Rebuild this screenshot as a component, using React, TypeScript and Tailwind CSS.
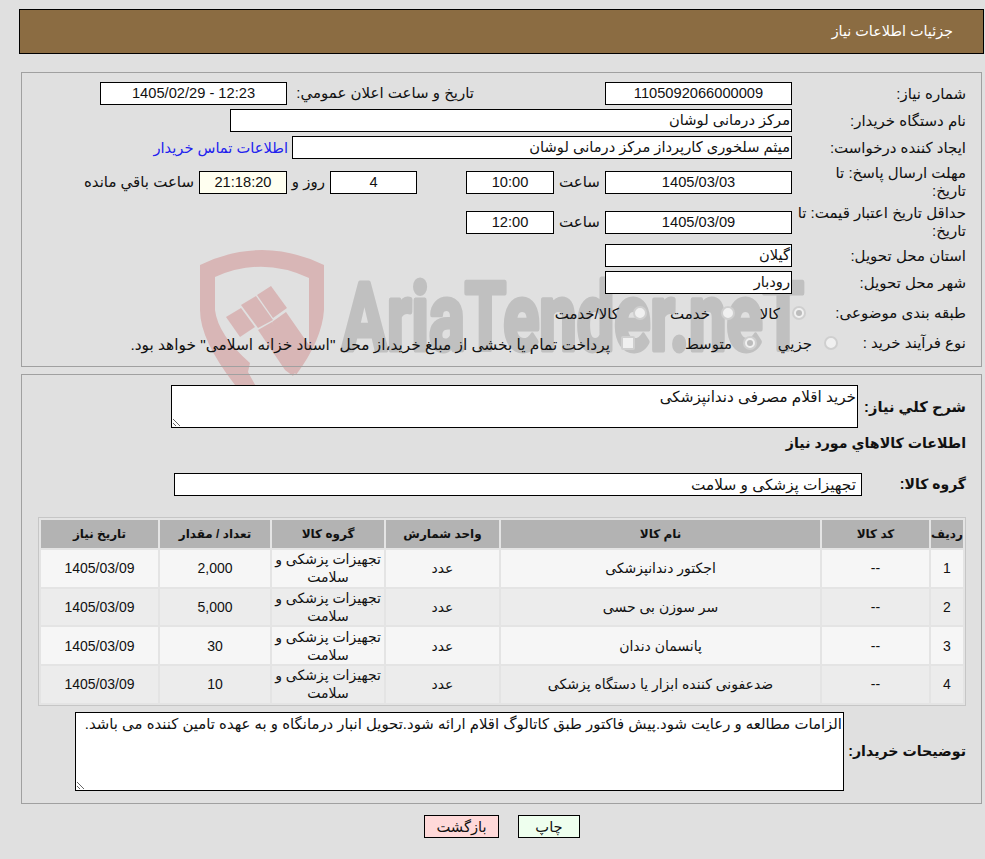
const font = "font-['Liberation_Sans','DejaVu_Sans',sans-serif]"

function Field({ className, bg = 'bg-white', children }: { className: string; bg?: string; children?: React.ReactNode }) {
  return (
    <div className={`flex h-[23px] shrink-0 items-center overflow-hidden border border-black leading-none ${bg} ${className}`}>
      {children}
    </div>
  )
}

function Label({ children, className = 'w-[174px]' }: { children: React.ReactNode; className?: string }) {
  return <div className={`shrink-0 text-[15px] leading-[18px] ${className}`}>{children}</div>
}

function Radio({ checked }: { checked?: boolean }) {
  return (
    <span className="flex h-[14px] w-[14px] shrink-0 items-center justify-center rounded-full border-2 border-[#cfcfcf] bg-[#f0f0f0]">
      {checked && <span className="h-[6px] w-[6px] rounded-full bg-[#bcbcbc]" />}
    </span>
  )
}

function Option({ width, gap, checked, children }: { width: string; gap: string; checked?: boolean; children: React.ReactNode }) {
  return (
    <div className={`flex shrink-0 items-center ${width}`}>
      <Radio checked={checked} />
      <span className={`whitespace-nowrap pt-1 text-[15px] ${gap}`}>{children}</span>
    </div>
  )
}

function Watermark() {
  return (
    <svg className="absolute left-0 top-0" width="985" height="859" viewBox="0 0 985 859">
      <g fill="#d8b6b6">
        <path d="M200 265 Q262 235 324 265 L324 310 Q322 340 296 375 L272 322 L286 312 L309 345 Q309 325 309 278 Q262 256 215 277 L215 310 Q218 335 250 363 L248 372 L258 390 L235 385 Q200 340 200 310 Z" />
        <polygon points="226,317 241,308 255,327 240,337" />
        <polygon points="241,305 256,296 273,320 258,328" />
        <polygon points="257,295 271,286 287,308 273,318" />
        <polygon points="258,330 272,322 300,365 293,376 285,370" />
      </g>
      <text
        x="342"
        y="350"
        direction="ltr"
        textAnchor="start"
        textLength="462"
        lengthAdjust="spacingAndGlyphs"
        fill="#c0c0c0"
        stroke="#c0c0c0"
        strokeWidth="5"
        strokeLinejoin="round"
        fontSize="95"
        fontWeight="700"
        fontFamily="Roboto, sans-serif"
      >
        AriaTender.neT
      </text>
    </svg>
  )
}

const rows = [
  ['1', 'اجکتور دندانپزشکی', '2,000'],
  ['2', 'سر سوزن بی حسی', '5,000'],
  ['3', 'پانسمان دندان', '30'],
  ['4', 'ضدعفونی کننده ابزار یا دستگاه پزشکی', '10'],
]

export default function App() {
  return (
    <div dir="rtl" className={`relative min-h-[859px] overflow-hidden bg-[#e0e0e0] text-[14.67px] text-[#111] ${font}`}>
      <Watermark />
      <div className="relative">
        <div className="pl-[19px] pr-px pt-[9px]">
          <div className="flex h-[45px] items-center border border-black bg-[#8b6c42] pr-[30px] text-[14.4px] text-white">جزئیات اطلاعات نیاز</div>
        </div>

        <div className="ml-[21px] mr-[3px] mt-[18px] h-[295px] border border-[#a0a0a0] pr-[15px] pt-[9px]">
          <div className="flex h-[23px] items-center">
            <Label>شماره نیاز:</Label>
            <Field className="w-[187px] justify-center">1105092066000009</Field>
            <div className="mr-[131px] w-[187px] shrink-0 whitespace-nowrap text-[15px]">تاریخ و ساعت اعلان عمومي:</div>
            <Field className="w-[187px] justify-center">12:23 - 1405/02/29</Field>
          </div>
          <div className="mt-[4px] flex h-[23px] items-center">
            <Label>نام دستگاه خریدار:</Label>
            <Field className="w-[562px] pr-px">مرکز درمانی لوشان</Field>
          </div>
          <div className="mt-[4px] flex h-[23px] items-center">
            <Label>ایجاد کننده درخواست:</Label>
            <Field className="w-[500px] pr-px">میثم سلخوری کارپرداز مرکز درمانی لوشان</Field>
            <a className="mr-[4px] whitespace-nowrap text-[#2222ee]">اطلاعات تماس خریدار</a>
          </div>
          <div className="mt-[5px] flex h-[36px] items-center">
            <Label>مهلت ارسال پاسخ: تا<br />تاریخ:</Label>
            <Field className="w-[187px] justify-center">1405/03/03</Field>
            <div className="w-[51px] shrink-0 text-center text-[15px]">ساعت</div>
            <Field className="w-[88px] justify-center">10:00</Field>
            <div className="w-[49px] shrink-0" />
            <Field className="w-[87px] justify-center">4</Field>
            <div className="w-[43px] shrink-0 pr-[5px] text-[15px]">روز و</div>
            <Field className="w-[88px] justify-center" bg="bg-[#fffff0]">21:18:20</Field>
            <div className="mr-[5px] whitespace-nowrap text-[15px]">ساعت باقي مانده</div>
          </div>
          <div className="mt-[4px] flex h-[36px] items-center">
            <Label>حداقل تاریخ اعتبار قیمت: تا<br />تاریخ:</Label>
            <Field className="w-[187px] justify-center">1405/03/09</Field>
            <div className="w-[51px] shrink-0 text-center text-[15px]">ساعت</div>
            <Field className="w-[88px] justify-center">12:00</Field>
          </div>
          <div className="mt-[4px] flex h-[23px] items-center">
            <Label>استان محل تحویل:</Label>
            <Field className="w-[187px] pr-px">گیلان</Field>
          </div>
          <div className="mt-[4px] flex h-[23px] items-center">
            <Label>شهر محل تحویل:</Label>
            <Field className="w-[187px] pr-px">رودبار</Field>
          </div>
          <div className="mt-[7px] flex h-[23px] items-center">
            <Label className="w-[160px]">طبقه بندی موضوعی:</Label>
            <Option width="w-[71px]" gap="mr-[12px]" checked>کالا</Option>
            <Option width="w-[88px]" gap="mr-[11px]">خدمت</Option>
            <Option width="w-[120px]" gap="mr-[14px]">کالا/خدمت</Option>
          </div>
          <div className="mt-[7px] flex h-[23px] items-center">
            <Label className="w-[128px]">نوع فرآیند خرید :</Label>
            <Option width="w-[81px]" gap="mr-[12px]">جزيي</Option>
            <Option width="w-[122px]" gap="mr-[11px]" checked>متوسط</Option>
            <span className="h-[14px] w-[14px] shrink-0 rounded-[2px] border-2 border-[#cfcfcf] bg-[#f0f0f0]" />
            <span className="mr-[11px] whitespace-nowrap pt-1 text-[15.4px]">پرداخت تمام یا بخشی از مبلغ خرید،از محل "اسناد خزانه اسلامی" خواهد بود.</span>
          </div>
        </div>

        <div className="ml-[21px] mr-[3px] mt-[7px] h-[430px] border border-[#a0a0a0] pl-[16px] pr-[15px] pt-[10px]">
          <div className="flex items-center">
            <div className="w-[108px] shrink-0 pt-[1px] font-bold">شرح كلي نياز:</div>
            <textarea
              readOnly
              className="block h-[43px] w-[687px] border border-black bg-white px-px pt-[2px] text-[15.2px] leading-[18px] outline-none"
              defaultValue="خرید اقلام مصرفی دندانپزشکی"
            />
          </div>
          <div className="mt-[6px] h-[18px] text-[14.2px] font-bold leading-[18px]">اطلاعات كالاهاي مورد نياز</div>
          <div className="mt-[21px] flex items-center">
            <div className="w-[104px] shrink-0 text-[14px] font-bold">گروه کالا:</div>
            <Field className="w-[688px] pr-[5px] text-[15.3px]">تجهیزات پزشکی و سلامت</Field>
          </div>
          <table className="mt-[21px] w-[928px] table-fixed border-separate border-spacing-[2px] border border-[#c6c6c6] bg-[#e4e4e4] text-center text-[14px] leading-[18px]">
            <thead>
              <tr className="h-[28px] bg-[#b3b3b3] text-[12px] font-bold">
                <th className="w-[32px] p-0">ردیف</th>
                <th className="w-[107px] p-0">کد کالا</th>
                <th className="w-[319px] p-0">نام کالا</th>
                <th className="w-[113px] p-0">واحد شمارش</th>
                <th className="w-[112px] p-0">گروه کالا</th>
                <th className="w-[110px] p-0">تعداد / مقدار</th>
                <th className="p-0">تاریخ نیاز</th>
              </tr>
            </thead>
            <tbody>
              {rows.map((row, i) => (
                <tr key={row[0]} className={`h-[36.7px] ${i % 2 === 0 ? 'bg-[#f6f6f6]' : 'bg-[#ececec]'}`}>
                  <td className="p-0">{row[0]}</td>
                  <td className="p-0">--</td>
                  <td className="p-0">{row[1]}</td>
                  <td className="p-0">عدد</td>
                  <td className="p-0">تجهیزات پزشکی و سلامت</td>
                  <td className="p-0">{row[2]}</td>
                  <td className="p-0">1405/03/09</td>
                </tr>
              ))}
            </tbody>
          </table>
          <div className="mt-[6px] flex items-center">
            <div className="w-[122px] shrink-0 text-[14.2px] font-bold">توضیحات خریدار:</div>
            <textarea
              readOnly
              className="block h-[79px] w-[769px] border border-black bg-white px-px py-[2px] text-[14.9px] leading-[18px] outline-none"
              defaultValue="الزامات مطالعه و رعایت شود.پیش فاکتور طبق کاتالوگ اقلام ارائه شود.تحویل انبار درمانگاه و به عهده تامین کننده می باشد."
            />
          </div>
        </div>

        <div className="mt-[11px] flex justify-center gap-[19px] pl-[19px]">
          <button className="h-[23px] w-[62px] border border-black bg-[#eeffee]">چاپ</button>
          <button className="h-[23px] w-[75px] border border-black bg-[#ffd9d9]">بازگشت</button>
        </div>
      </div>
    </div>
  )
}
